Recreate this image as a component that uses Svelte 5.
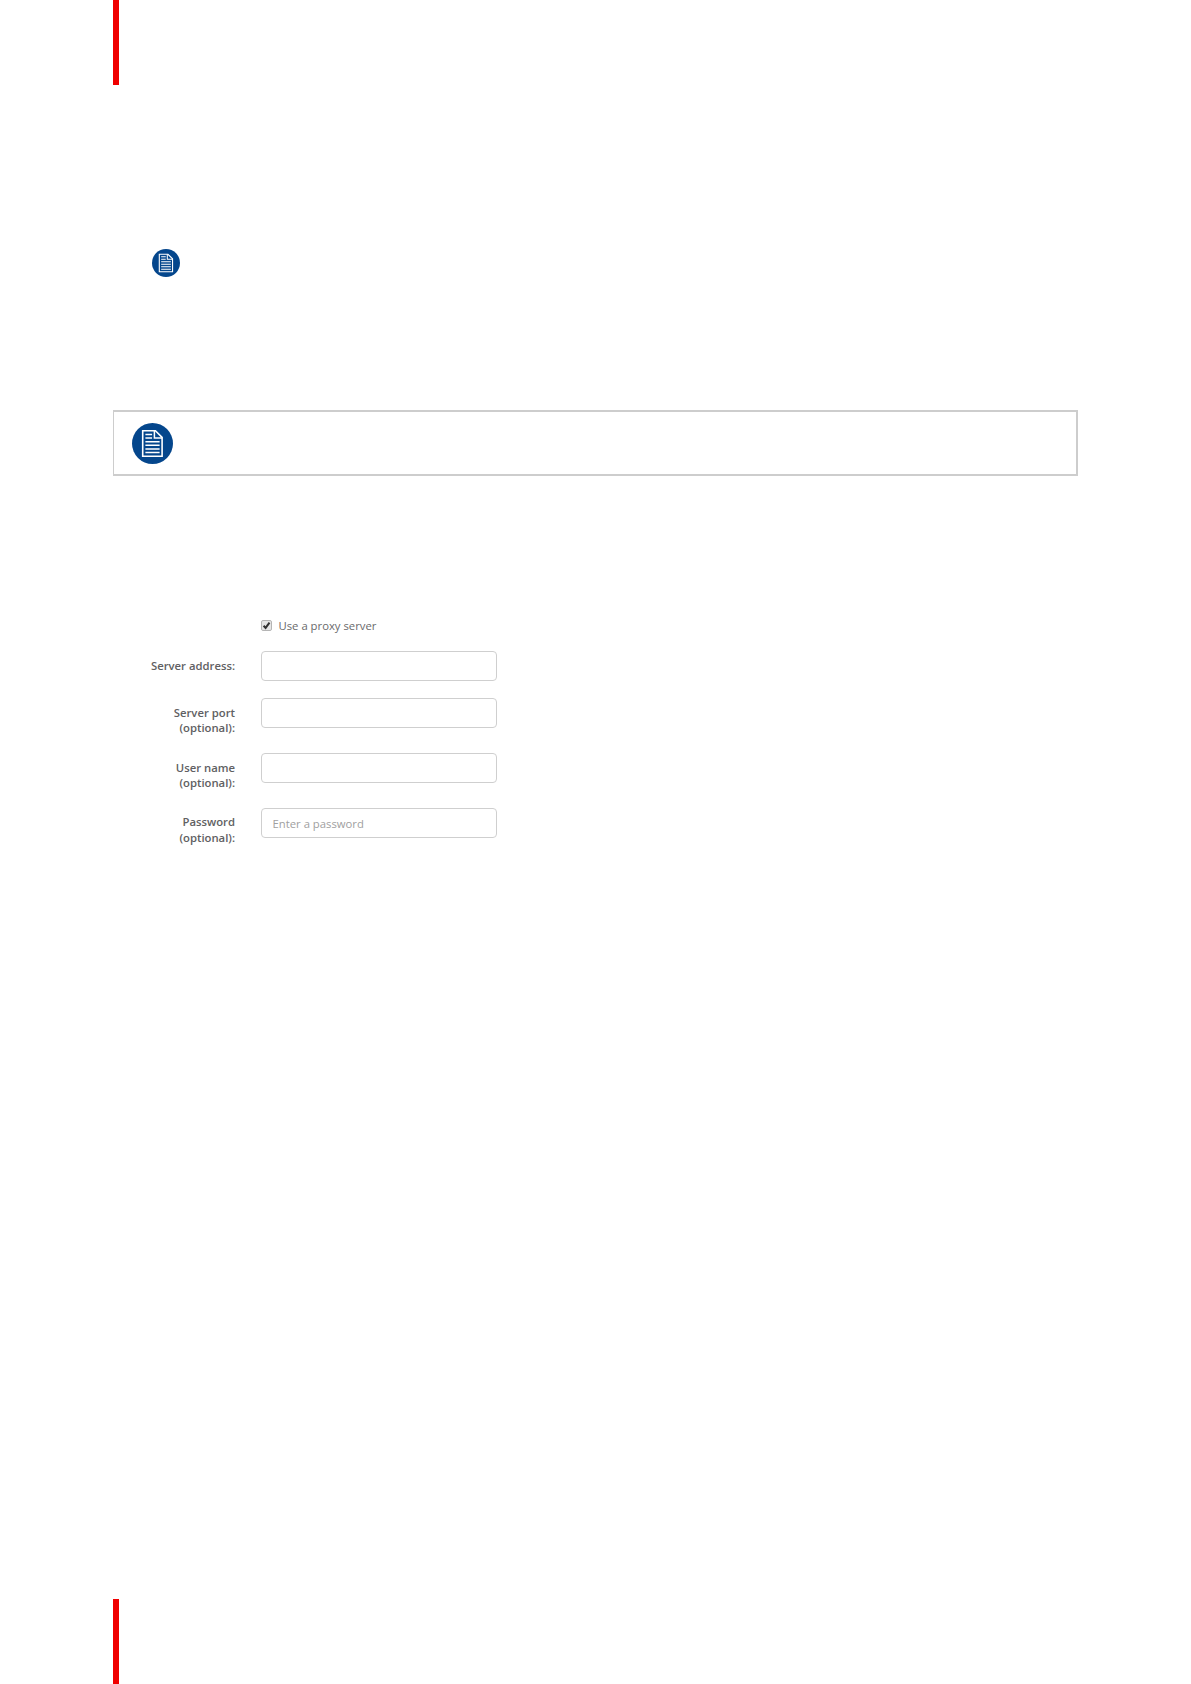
<script lang="ts">
	let useProxy = $state(true);

	const fields = [
		{ id: 'address', label: 'Server address:', type: 'text', placeholder: '' },
		{ id: 'port', label: 'Server port (optional):', type: 'text', placeholder: '' },
		{ id: 'user', label: 'User name (optional):', type: 'text', placeholder: '' },
		{
			id: 'password',
			label: 'Password (optional):',
			type: 'password',
			placeholder: 'Enter a password'
		}
	];
</script>

{#snippet noteIcon()}
	<svg class="note-icon" viewBox="0 0 41 41" fill="none" xmlns="http://www.w3.org/2000/svg">
		<circle cx="20.5" cy="20.5" r="20.5" fill="#04468c" />
		<path d="M10.7 7.7H23.4L30.1 14.4V33.2H10.7Z" stroke="#fff" stroke-width="1.6" />
		<path d="M22.4 7.7V14.9H30" stroke="#fff" stroke-width="1.5" />
		<path
			d="M13.4 11.5H20.1M13.4 15.1H20.1M13.4 18.7H27.6M13.4 22.3H27.6M13.4 25.9H27.6M13.4 29.5H27.6"
			stroke="#fff"
			stroke-width="1.5"
		/>
	</svg>
{/snippet}

<main class="page">
	<div class="bar"></div>
	<div class="content">
		<div class="inline-note">{@render noteIcon()}</div>
		<div class="note">{@render noteIcon()}</div>

		<form class="proxy">
			<label class="check">
				<input type="checkbox" bind:checked={useProxy} />
				<svg class="box" viewBox="0 0 11 11" fill="none" xmlns="http://www.w3.org/2000/svg">
					<rect x="0.5" y="0.5" width="10" height="10" rx="1.5" fill="#e6e6e6" stroke="#b5b5b5" />
					{#if useProxy}
						<path d="M2.6 5.8L4.6 7.9L8.5 2.7" stroke="#333" stroke-width="2" />
					{/if}
				</svg>
				<span>Use a proxy server</span>
			</label>
			{#each fields as field}
				<div class="row">
					<label for={field.id}>{field.label}</label>
					<input id={field.id} type={field.type} placeholder={field.placeholder} />
				</div>
			{/each}
		</form>
	</div>
	<div class="bar"></div>
</main>

<style>
	:global(body) {
		margin: 0;
		background: #fff;
	}

	.page {
		display: flex;
		flex-direction: column;
		box-sizing: border-box;
		height: 1684px;
		padding-left: 113px;
		font-family: 'Open Sans', sans-serif;
		font-size: 11.3px;
		color: #606062;
	}

	.bar {
		flex: none;
		width: 6px;
		height: 85px;
		background: #f00000;
	}

	.content {
		flex: 1;
		padding-top: 164px;
	}

	.note-icon {
		display: block;
		width: 41px;
		height: 41px;
	}

	.inline-note {
		padding-left: 39px;
	}

	.inline-note .note-icon {
		width: 28px;
		height: 28px;
	}

	.note {
		display: flex;
		box-sizing: border-box;
		width: 965px;
		height: 66px;
		margin-top: 133px;
		padding: 10.6px 0 0 17.7px;
		border: 2px solid #cdcdcd;
		border-left-width: 1px;
	}

	.proxy {
		width: 384px;
		margin-top: 140px;
	}

	.check {
		display: flex;
		align-items: center;
		height: 18px;
		margin: 0 0 17px 148px;
		color: #6a6a6c;
	}

	.check input {
		position: absolute;
		opacity: 0;
	}

	.box {
		width: 11px;
		height: 11px;
		margin-right: 6.5px;
	}

	.row {
		display: grid;
		grid-template-columns: 76px 236px;
		column-gap: 26px;
		justify-content: end;
		align-items: start;
		height: 55px;
	}

	.row:nth-child(2) {
		grid-template-columns: 90px 236px;
		height: 47px;
	}

	.row label {
		padding-top: 7px;
		font-weight: 600;
		line-height: 15.3px;
		text-align: right;
	}

	.row:last-child label {
		padding-top: 6px;
		line-height: 15.7px;
	}

	.row input {
		box-sizing: border-box;
		width: 236px;
		height: 30px;
		padding: 0 10.5px;
		border: 1px solid #cfcfcf;
		border-radius: 4px;
		background: #fff;
		font: inherit;
		color: inherit;
		outline: none;
	}

	.row input::placeholder {
		color: #a0a0a0;
	}
</style>
